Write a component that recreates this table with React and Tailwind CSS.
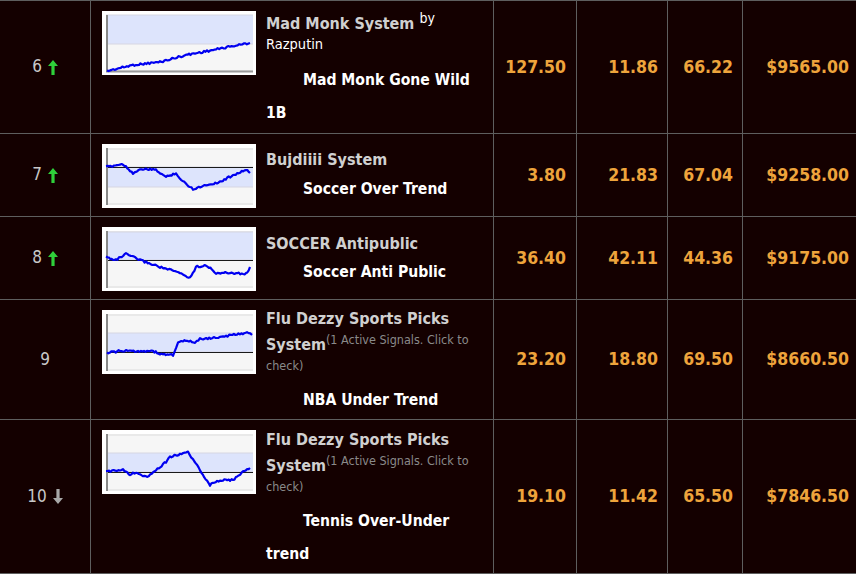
import React from "react"

const font = "font-['DejaVu_Sans_Condensed','DejaVu_Sans',sans-serif]"

const rows = [
    {
        rank: 6, dir: 'up', h: 'h-[133px]', pt: 'pt-[6px]', mt: 'mt-[10px]',
        chart: { band: [4, 33], zero: null, axis: true, seed: 1, pts: [[5, 60], [31, 54], [58, 51], [84, 44], [111, 39], [131, 35], [148, 32]] },
        title: 'Mad Monk System', by: 'Razputin', strat: 'Mad Monk Gone Wild 1B',
        vals: ['127.50', '11.86', '66.22', '$9565.00']
    },
    {
        rank: 7, dir: 'up', h: 'h-[83px]', pt: 'pt-[16px]', mt: 'mt-[3px]',
        chart: { band: [23, 43], zero: 23, seed: 2, pts: [[4, 23], [21, 20], [31, 29], [41, 25], [54, 26], [64, 33], [74, 29], [79, 36], [91, 45], [104, 41], [118, 38], [131, 31], [144, 26], [148, 29]] },
        title: 'Bujdiiii System', strat: 'Soccer Over Trend',
        vals: ['3.80', '21.83', '67.04', '$9258.00']
    },
    {
        rank: 8, dir: 'up', h: 'h-[83px]', pt: 'pt-[17px]', mt: 'mt-[2px]',
        chart: { band: [5, 33], zero: 33, seed: 3, pts: [[4, 30], [14, 33], [24, 27], [38, 33], [58, 40], [78, 46], [88, 51], [94, 40], [104, 38], [114, 46], [131, 46], [144, 47], [148, 40]] },
        title: 'SOCCER Antipublic', strat: 'Soccer Anti Public',
        vals: ['36.40', '42.11', '44.36', '$9175.00']
    },
    {
        rank: 9, dir: null, h: 'h-[120px]', pt: 'pt-[9px]', mt: 'mt-[2px]',
        chart: { band: [23, 42], zero: 42, seed: 4, pts: [[5, 43], [18, 41], [51, 41], [58, 44], [71, 45], [76, 33], [81, 31], [93, 32], [98, 29], [121, 27], [135, 24], [145, 23], [150, 25]] },
        title: 'Flu Dezzy Sports Picks System', signals: true, strat: 'NBA Under Trend',
        vals: ['23.20', '18.80', '69.50', '$8660.50']
    },
    {
        rank: 10, dir: 'down', h: 'h-[155px] border-b', pt: 'pt-[10px]', mt: 'mt-[2px]',
        chart: { band: [23, 42], zero: 42, seed: 5, pts: [[4, 42], [21, 39], [28, 45], [34, 42], [44, 47], [54, 40], [64, 32], [68, 27], [78, 24], [86, 22], [91, 30], [98, 40], [108, 55], [118, 50], [131, 50], [141, 42], [148, 38]] },
        title: 'Flu Dezzy Sports Picks System', signals: true, strat: 'Tennis Over-Under trend',
        vals: ['19.10', '11.42', '65.50', '$7846.50']
    },
]

const noise = (i, seed) => {
    const v = Math.sin(i * 12.9898 + seed * 78.233) * 43758.5453
    return v - Math.floor(v) - 0.5
}

const linePoints = (pts, seed) => {
    const out = []
    let i = 0
    for (let k = 0; k < pts.length - 1; k++) {
        const [x1, y1] = pts[k]
        const [x2, y2] = pts[k + 1]
        const steps = Math.max(1, Math.round((x2 - x1) / 1.5))
        for (let s = 0; s < steps; s++) {
            const t = s / steps
            out.push(`${(x1 + (x2 - x1) * t).toFixed(1)},${(y1 + (y2 - y1) * t + noise(i++, seed) * 2).toFixed(1)}`)
        }
    }
    const last = pts[pts.length - 1]
    out.push(`${last[0]},${last[1]}`)
    return out.join(' ')
}

const Chart = ({ band, zero, axis, seed, pts }) => (
    <svg width="154" height="64" viewBox="0 0 154 64" className="block shrink-0">
        <rect x="0" y="0" width="154" height="64" fill="#fff" />
        <rect x="4" y="4" width="147" height="57" fill="#f6f6f6" />
        <line x1="4" y1="5" x2="151" y2="5" stroke="#e4e4e4" strokeWidth="1.5" />
        <line x1="4" y1="60" x2="151" y2="60" stroke="#e4e4e4" strokeWidth="1.5" />
        <rect x="4" y={band[0]} width="147" height={band[1] - band[0]} fill="#dde4fc" />
        <line x1="4" y1={band[0]} x2="151" y2={band[0]} stroke="#d6d6e2" strokeWidth="1" />
        <line x1="4" y1={band[1]} x2="151" y2={band[1]} stroke="#d6d6e2" strokeWidth="1" />
        {zero && <line x1="4" y1={zero + 0.5} x2="151" y2={zero + 0.5} stroke="#1a1a1a" strokeWidth="1.2" />}
        {axis && <line x1="4" y1="60.5" x2="151" y2="60.5" stroke="#999" strokeWidth="2" />}
        <line x1="5" y1="4" x2="5" y2="61" stroke="#888" strokeWidth="2" />
        <polyline points={linePoints(pts, seed)} fill="none" stroke="#0000f0" strokeWidth="2.2" strokeLinejoin="round" />
    </svg>
)

const Arrow = ({ dir }) => (
    <svg width="10" height="15" viewBox="0 0 10 15" className={dir === 'down' ? 'rotate-180' : ''}>
        <path d="M5 0 L10 6 L6.6 6 L6.6 15 L3.4 15 L3.4 6 L0 6 Z" fill={dir === 'up' ? '#2fd03a' : '#a8a8a8'} />
    </svg>
)

const App = () => {
    return (
        <div className={`w-[856px] h-[574px] overflow-hidden bg-[#140000] ${font}`}>
            <div className="w-[858px]">
                {rows.map(row => (
                    <div key={row.rank} className={`grid grid-cols-[90px_403px_83px_91px_75px_116px] border-t border-[#5e5e5e] ${row.h}`}>
                        <div className="flex items-center justify-center gap-[6px] text-[17px] text-[#c8c8c8]">
                            <span>{row.rank}</span>
                            {row.dir && <Arrow dir={row.dir} />}
                        </div>
                        <div className="flex items-start border-l border-[#5e5e5e] pl-[11px] pr-[10px]">
                            <div className="pt-[10px]">
                                <Chart {...row.chart} />
                            </div>
                            <div className={`ml-[10px] w-[217px] ${row.pt}`}>
                                <div className="text-[16px] font-bold text-[#d0d0d0] leading-[20px]">
                                    {row.title}
                                    {row.by && <>
                                        {' '}<span className="align-super text-[14px] font-normal leading-[22px] text-white">by</span>{' '}
                                        <span className="text-[14.5px] font-normal leading-[20px] text-white">{row.by}</span>
                                    </>}
                                    {row.signals && <span className="align-super text-[12.5px] font-normal leading-[22px] text-[#8a8a8a]">(1 Active Signals. Click to check)</span>}
                                </div>
                                <div className={`${row.mt} indent-[37px] text-[15.6px] font-bold leading-[33px] text-white`}>
                                    {row.strat}
                                </div>
                            </div>
                        </div>
                        {row.vals.map((v, i) => (
                            <div key={i} className={`flex items-center justify-end border-l border-[#5e5e5e] text-[17.5px] font-bold text-[#eea43c] ${i === 0 ? 'pr-[10px]' : 'pr-[9px]'}`}>
                                {v}
                            </div>
                        ))}
                    </div>
                ))}
            </div>
        </div>
    )
}

export default App
